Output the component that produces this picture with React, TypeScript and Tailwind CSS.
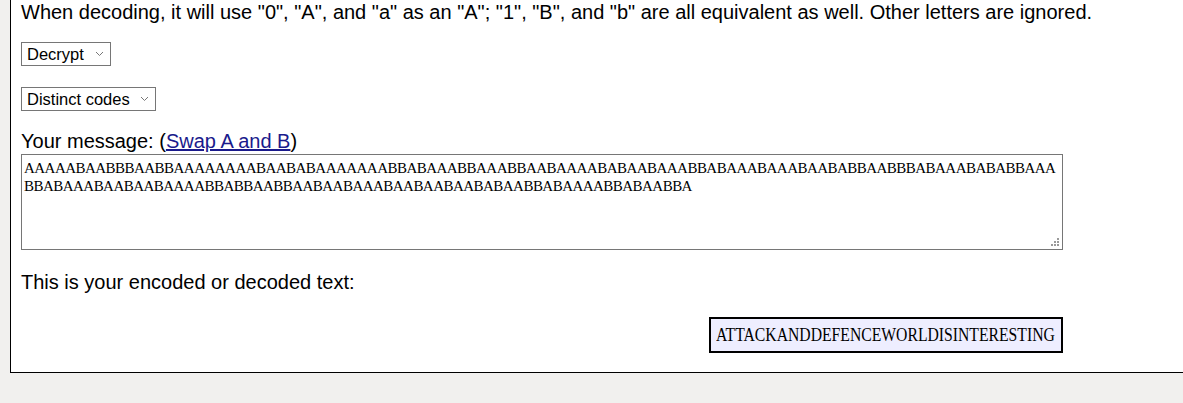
import React from "react";

const CODES: Record<string, string> = {
  A: "AAAAA", B: "AAAAB", C: "AAABA", D: "AAABB", E: "AABAA", F: "AABAB", G: "AABBA", H: "AABBB",
  I: "ABAAA", J: "ABAAB", K: "ABABA", L: "ABABB", M: "ABBAA", N: "ABBAB", O: "ABBBA", P: "ABBBB",
  Q: "BAAAA", R: "BAAAB", S: "BAABA", T: "BAABB", U: "BABAA", V: "BABAB", W: "BABBA", X: "BABBB",
  Y: "BBAAA", Z: "BBAAB",
};
const PLAIN = "ATTACKANDDEFENCEWORLDISINTERESTING";
const CIPHER = PLAIN.split("").map((c) => CODES[c]).join("");

function Select({ label, width }: { label: string; width: string }) {
  return (
    <div className={`relative h-[24px] ${width} border border-[#767676] bg-white flex items-center pl-[5px]`}>
      <span className="text-[16.5px] leading-none text-black">{label}</span>
      <span className="absolute right-[6px] top-[8px]">
        <svg width="9" height="6" viewBox="0 0 9 6">
          <path d="M1 1 L4.5 4.5 L8 1" fill="none" stroke="#777" strokeWidth="1" />
        </svg>
      </span>
    </div>
  );
}

export default function App() {
  return (
    <div className="w-[1183px] h-[403px] overflow-hidden bg-[#f1f0ee] font-['Liberation_Sans',Arial,sans-serif]">
      <div className="ml-[10px] w-[1200px] h-[373px] bg-white border-l border-b border-black pl-[10px] pt-[1px] text-black">
        <p className="text-[20px] leading-[23px] whitespace-nowrap">
          When decoding, it will use "0", "A", and "a" as an "A"; "1", "B", and "b" are all equivalent as well. Other letters are ignored.
        </p>
        <div className="mt-[18px]">
          <Select label="Decrypt" width="w-[90px]" />
        </div>
        <div className="mt-[21px]">
          <Select label="Distinct codes" width="w-[135px]" />
        </div>
        <p className="mt-[19px] text-[20px] leading-[23px]">
          Your message: (<a href="#" className="text-[#1a1a8c] underline">Swap A and B</a>)
        </p>
        <div className="relative mt-[1px] w-[1042px] h-[96px] border border-[#767676] bg-white px-[2px] pt-[4px]">
          <div className="font-['Liberation_Serif',serif] text-[15px] leading-[18px] tracking-[-0.53px] break-all text-black">
            {CIPHER}
          </div>
          <svg className="absolute right-[2px] bottom-[2px]" width="10" height="10" viewBox="0 0 10 10">
            <rect x="7" y="1" width="2" height="2" fill="#9a9a9a" />
            <rect x="4" y="4" width="2" height="2" fill="#9a9a9a" />
            <rect x="7" y="4" width="2" height="2" fill="#9a9a9a" />
            <rect x="1" y="7" width="2" height="2" fill="#9a9a9a" />
            <rect x="4" y="7" width="2" height="2" fill="#9a9a9a" />
            <rect x="7" y="7" width="2" height="2" fill="#9a9a9a" />
          </svg>
        </div>
        <p className="mt-[21px] text-[20px] leading-[23px]">This is your encoded or decoded text:</p>
        <div className="mt-[23px] w-[1042px] flex justify-end">
          <div className="h-[36px] w-[354px] border-2 border-black bg-[#eeeeff] flex items-center pl-[5px] overflow-hidden">
            <span className="inline-block origin-left scale-x-[0.872] font-['Liberation_Serif',serif] text-[18px] leading-none text-black whitespace-nowrap">
              {PLAIN}
            </span>
          </div>
        </div>
      </div>
    </div>
  );
}
